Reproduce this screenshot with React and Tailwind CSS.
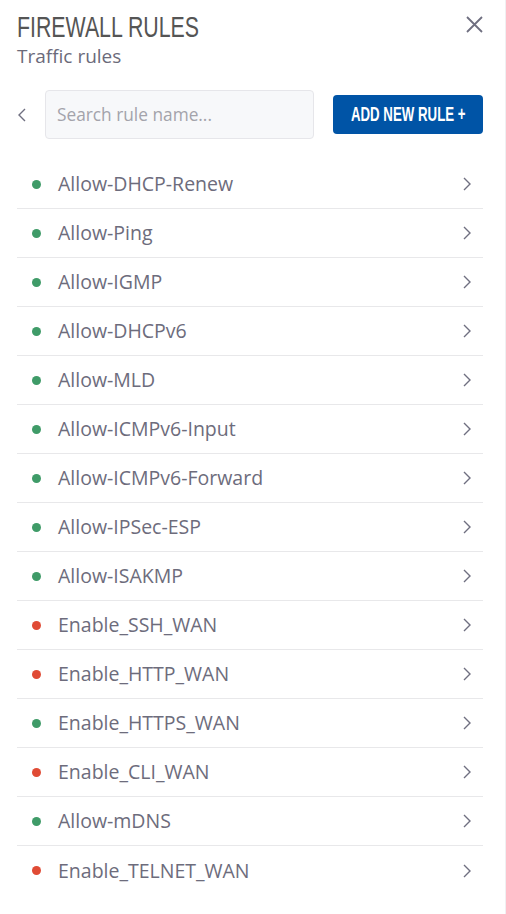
import React from 'react';

const rules = [
  { name: 'Allow-DHCP-Renew', on: true },
  { name: 'Allow-Ping', on: true },
  { name: 'Allow-IGMP', on: true },
  { name: 'Allow-DHCPv6', on: true },
  { name: 'Allow-MLD', on: true },
  { name: 'Allow-ICMPv6-Input', on: true },
  { name: 'Allow-ICMPv6-Forward', on: true },
  { name: 'Allow-IPSec-ESP', on: true },
  { name: 'Allow-ISAKMP', on: true },
  { name: 'Enable_SSH_WAN', on: false },
  { name: 'Enable_HTTP_WAN', on: false },
  { name: 'Enable_HTTPS_WAN', on: true },
  { name: 'Enable_CLI_WAN', on: false },
  { name: 'Allow-mDNS', on: true },
  { name: 'Enable_TELNET_WAN', on: false },
];

const Chevron = ({ dir = 'right' }) => (
  <svg width="8" height="14" viewBox="0 0 8 14" fill="none" stroke="currentColor" strokeWidth="1.4">
    {dir === 'right' ? <path d="M1 1l6 6-6 6" /> : <path d="M7 1L1 7l6 6" />}
  </svg>
);

const RuleRow = ({ rule, last }) => (
  <div className={`h-[49px] flex items-center ${last ? '' : 'border-b border-[#e8e8ea]'}`}>
    <span className={`w-[9px] h-[9px] rounded-full ml-[15px] ${rule.on ? 'bg-[#3f9b68]' : 'bg-[#e04b35]'}`} />
    <span className="ml-[17px] flex-1 text-[19.5px] text-[#6d6c7c]">{rule.name}</span>
    <span className="text-[#6f6f80] mr-[12px] flex items-center">
      <Chevron />
    </span>
  </div>
);

export default function App() {
  return (
    <div className="w-[506px] h-[914px] bg-white border-r border-[#f0f0f2] font-['Open_Sans',sans-serif] overflow-hidden">
      <div className="pl-[17px] pr-[22px] pt-[10px]">
        <div className="flex items-start justify-between">
          <div>
            <h1 className="text-[29px] leading-[34px] text-[#555] font-['Liberation_Sans',sans-serif] whitespace-nowrap inline-block origin-left scale-x-[0.735]">
              FIREWALL RULES
            </h1>
            <p className="text-[19px] leading-[26px] text-[#6b6a7a] -mt-[1px]">Traffic rules</p>
          </div>
          <button className="mt-[6px] text-[#6f6f80]">
            <svg width="17" height="17" viewBox="0 0 17 17" stroke="currentColor" strokeWidth="1.8">
              <path d="M1 1l15 15M16 1L1 16" />
            </svg>
          </button>
        </div>

        <div className="flex items-center mt-[21px]">
          <span className="text-[#6f6f80] w-[28px] flex items-center pl-[1px]">
            <Chevron dir="left" />
          </span>
          <input
            className="w-[269px] h-[49px] rounded-[4px] border border-[#e6e6ea] bg-[#f7f8fa] px-[11px] text-[17.3px] text-[#555] placeholder:text-[#a3a3ab] outline-none"
            placeholder="Search rule name..."
          />
          <button className="ml-auto w-[150px] h-[39px] rounded-[4px] bg-[#0054a6] text-white flex items-center justify-center overflow-hidden">
            <span className="inline-block whitespace-nowrap text-[19.5px] font-bold font-['Liberation_Sans',sans-serif] scale-x-[0.68]">
              ADD NEW RULE +
            </span>
          </button>
        </div>

        <div className="mt-[21px]">
          {rules.map((r, i) => (
            <RuleRow key={r.name} rule={r} last={i === rules.length - 1} />
          ))}
        </div>
      </div>
    </div>
  );
}
